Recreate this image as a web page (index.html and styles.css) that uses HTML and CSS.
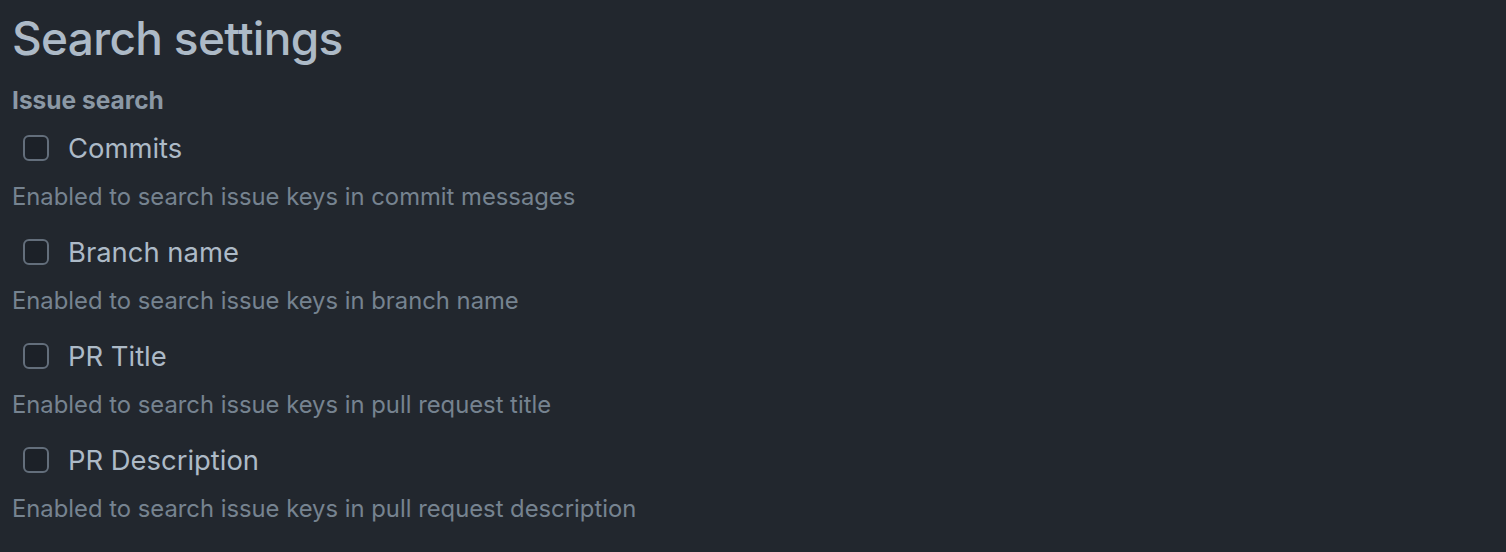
FILE: index.html
```html
<!DOCTYPE html>
<html lang="en">
<head>
<meta charset="utf-8">
<title>Search settings</title>
<link rel="stylesheet" href="styles.css">
</head>
<body>
<main class="page">
  <h1 class="title">Search settings</h1>
  <h2 class="section">Issue search</h2>
  <div class="options">
    <div class="option">
      <label class="check"><span class="box"></span><span class="label">Commits</span></label>
      <p class="desc">Enabled to search issue keys in commit messages</p>
    </div>
    <div class="option">
      <label class="check"><span class="box"></span><span class="label">Branch name</span></label>
      <p class="desc">Enabled to search issue keys in branch name</p>
    </div>
    <div class="option">
      <label class="check"><span class="box"></span><span class="label">PR Title</span></label>
      <p class="desc">Enabled to search issue keys in pull request title</p>
    </div>
    <div class="option">
      <label class="check"><span class="box"></span><span class="label">PR Description</span></label>
      <p class="desc">Enabled to search issue keys in pull request description</p>
    </div>
  </div>
</main>
</body>
</html>
```

FILE: styles.css
```css
html, body {
  margin: 0;
  padding: 0;
  background: #22272e;
  height: 100%;
}
body {
  font-family: Inter, "Noto Sans", "Liberation Sans", sans-serif;
  color: #adbac7;
}
.page {
  padding: 10px 12px 0 12px;
}
.title {
  margin: 0;
  font-size: 46px;
  font-weight: 500;
  line-height: 56px;
  letter-spacing: -0.7px;
  color: #adbac7;
}
.section {
  margin: 19px 0 0 0;
  font-size: 24.5px;
  font-weight: 700;
  line-height: 30px;
  color: #8b98a5;
}
.options {
  display: flex;
  flex-direction: column;
  gap: 22px;
  margin-top: 15px;
}
.option {
  display: flex;
  flex-direction: column;
  gap: 16px;
}
.check {
  display: flex;
  align-items: center;
  gap: 19px;
  padding-left: 11px;
  height: 36px;
}
.box {
  width: 22px;
  height: 22px;
  border: 2px solid #636e7b;
  border-radius: 6px;
  background: #1c2128;
}
.label {
  font-size: 27.4px;
  line-height: 36px;
  color: #adbac7;
}
.desc {
  margin: 0;
  font-size: 23.8px;
  line-height: 30px;
  color: #768390;
}
```
